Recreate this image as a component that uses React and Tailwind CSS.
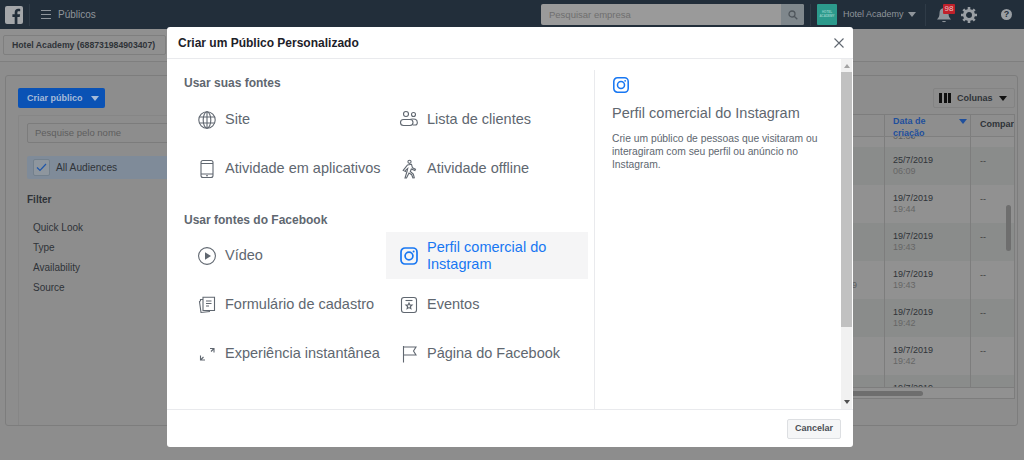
const FONT = { fontFamily: '"Liberation Sans", Arial, sans-serif' }

const ROWS = [
  { date: '25/7/2019', time: '06:09', dark: true },
  { date: '19/7/2019', time: '19:44', dark: false },
  { date: '19/7/2019', time: '19:43', dark: true },
  { date: '19/7/2019', time: '19:43', dark: false, note: '9' },
  { date: '19/7/2019', time: '19:42', dark: true },
  { date: '19/7/2019', time: '19:42', dark: false },
]

function Svg({ children, size = 20, className = '' }) {
  return (
    <svg
      width={size}
      height={size}
      viewBox="0 0 20 20"
      fill="none"
      stroke="currentColor"
      strokeWidth="1.1"
      className={className}
    >
      {children}
    </svg>
  )
}

const Globe = () => (
  <Svg>
    <circle cx="10" cy="10" r="8.2" />
    <ellipse cx="10" cy="10" rx="3.8" ry="8.2" />
    <path d="M10 1.8v16.4M2.4 7h15.2M2.4 13h15.2" />
  </Svg>
)

const Clients = () => (
  <Svg>
    <circle cx="7" cy="4" r="2.5" />
    <circle cx="14.500" cy="4.500" r="2" />
    <rect x="1.500" y="9.500" width="12.500" height="6" rx="3" />
    <path d="M11.500 9.300c1.500-.4 3.500-.4 4.800 0 2.700.8 2.700 5.700 0 5.700H14" />
  </Svg>
)

const Phone = () => (
  <Svg>
    <rect x="4" y="1.500" width="12" height="17" rx="2" />
    <path d="M4 4.500h12M4 15h12M9 16.800h2" />
  </Svg>
)

const Walker = () => (
  <Svg>
    <circle cx="10.500" cy="2.800" r="1.600" />
    <path d="M8.500 6l4-.7 1 3.500 3 1.500-.6 1.200-3.600-1.500-1 2.500 3 2.500 1 3.800-1.400.2-1.200-3.300-2.700-1.700-2.500 5H6l2-6.500.7-3-2 1.700-.2 1.300-2.300-1.100z" />
  </Svg>
)

const Play = () => (
  <Svg>
    <circle cx="10" cy="10" r="8.400" />
    <path d="M8 6.200l6 3.800-6 3.800z" fill="currentColor" stroke="none" />
  </Svg>
)

const Insta = ({ size = 20 }) => (
  <Svg size={size}>
    <rect x="2" y="2" width="16" height="16" rx="4" strokeWidth="1.700" />
    <circle cx="10" cy="10" r="3.900" strokeWidth="1.700" />
    <circle cx="14.600" cy="5.400" r="1" fill="currentColor" stroke="none" />
  </Svg>
)

const Form = () => (
  <Svg>
    <path d="M6 3.500V2.200h11.500v13.300H6z" />
    <path d="M9 6h5.500M9 8.500h5.500M9 11h3" />
    <path d="M6 4.500H3.500v1.500M3.500 6l-1 .5 1.500 11 9-1" />
  </Svg>
)

const Events = () => (
  <Svg>
    <rect x="2.500" y="2.500" width="15" height="15" rx="2.500" />
    <path d="M6.500 5.500h7" />
    <path d="M10 8l.9 2h2.100l-1.600 1.500.5 2.200-1.900-1.100-1.900 1.100.5-2.200L7 10h2.100z" />
  </Svg>
)

const Expand = () => (
  <Svg>
    <path d="M13 4.500h4v4M17 4.500l-3 3M3.500 11.500V16h4.500M3.500 16l3-3" />
  </Svg>
)

const Flag = () => (
  <Svg>
    <path d="M4.500 2v16.500M4.500 3h12.500l-2.500 4 2.500 4H4.500" />
  </Svg>
)

function Source({ icon, label, active }) {
  return (
    <div
      className={`flex h-[47px] items-center gap-[8px] pl-[13px] text-[14.5px] leading-[17px] ${
        active ? 'bg-[#f5f5f6] text-[#1877f2]' : 'text-[#606770]'
      }`}
    >
      <span className="w-[20px] shrink-0">{icon}</span>
      <span>{label}</span>
    </div>
  )
}

function Caret({ className = '' }) {
  return <span className={`inline-block border-x-[4px] border-t-[5px] border-x-transparent ${className}`} />
}

function TopBar() {
  return (
    <header className="flex h-[29px] items-center bg-[#222e3a] text-[#8f959b]">
      <svg width="18" height="18" viewBox="0 0 18 18" className="ml-[5px]">
        <rect width="18" height="18" rx="2" fill="#a4a7aa" />
        <path d="M12.400 18v-7h2.300l.4-2.700h-2.700V6.600c0-.8.300-1.300 1.400-1.300h1.400V2.900c-.3 0-1.100-.1-2-.1-2.100 0-3.500 1.300-3.500 3.500v2H7.400V11h2.300v7z" fill="#222e3a" />
      </svg>
      <div className="ml-[6px] h-[22px] w-px bg-[#2f3b47]" />
      <div className="ml-[11px] flex w-[10px] flex-col gap-[3px]">
        <span className="h-px bg-[#8f959b]" />
        <span className="h-px bg-[#8f959b]" />
        <span className="h-px bg-[#8f959b]" />
      </div>
      <span className="ml-[7px] w-[38px] whitespace-nowrap text-[10px]">Públicos</span>
      <div className="ml-[445px] flex h-[21px] w-[263px] overflow-hidden rounded-[2px] bg-[#9a9a9a]">
        <span className="flex-1 pl-[8px] text-[9.500px] leading-[21px] text-[#6f6f6f]">Pesquisar empresa</span>
        <span className="flex w-[23px] items-center justify-center bg-[#7f878c]">
          <svg width="10" height="10" viewBox="0 0 10 10" fill="none" stroke="#4f565c" strokeWidth="1.300">
            <circle cx="4" cy="4" r="3" />
            <path d="M6.200 6.200L9.300 9.300" />
          </svg>
        </span>
      </div>
      <div className="ml-[6px] h-[22px] w-px bg-[#2f3b47]" />
      <div className="ml-[6px] h-[21px] w-[20px] rounded-[1px] bg-[#2c9a8c] pt-[6px] text-center text-[3px] font-bold leading-[4px] text-[#8fcfc6]">
        HOTEL
        <br />
        ACADEMY
      </div>
      <span className="ml-[6px] w-[58px] whitespace-nowrap text-[9px]">Hotel Academy</span>
      <Caret className="ml-[7px] border-t-[#8f959b]" />
      <div className="ml-[9px] h-[22px] w-px bg-[#2f3b47]" />
      <div className="relative ml-[11px] h-[20px] w-[14px]">
        <svg width="14" height="16" viewBox="0 0 14 16" className="absolute left-0 top-[3px]" fill="#8f959b">
          <path d="M7 0c3 0 4.500 2.200 4.500 5 0 3 .7 4.500 2.500 6.500H0C1.800 9.500 2.500 8 2.500 5 2.500 2.200 4 0 7 0zM5 13h4c0 1.500-4 1.500-4 0z" />
        </svg>
        <span className="absolute left-[6px] top-[-1px] h-[10px] w-[12px] rounded-[1px] bg-[#c0202a] text-center text-[8px] leading-[10px] text-[#e8c4c6]">
          98
        </span>
      </div>
      <svg width="16" height="16" viewBox="0 0 16 16" className="ml-[10px]">
        <circle cx="8" cy="8" r="4.500" fill="none" stroke="#9a9fa4" strokeWidth="3" />
        <path d="M8 0v3M8 13v3M0 8h3M13 8h3M2.300 2.300l2.100 2.100M11.600 11.600l2.100 2.100M2.300 13.700l2.100-2.100M11.600 4.400l2.100-2.100" stroke="#9a9fa4" strokeWidth="2.600" />
      </svg>
      <span className="ml-[24px] h-[11px] w-[11px] rounded-full bg-[#9a9fa4] text-center text-[9px] font-bold leading-[11px] text-[#222e3a]">
        ?
      </span>
    </header>
  )
}

function Sidebar() {
  return (
    <aside className="flex w-[200px] shrink-0 flex-col">
      <button className="ml-[12px] flex h-[20px] w-[87px] items-center gap-[8px] whitespace-nowrap rounded-[2px] bg-[#0a52b5] pl-[9px] pt-px text-[9px] font-bold text-[#a6bcd9]">
        Criar público
        <Caret className="border-t-[#a6bcd9]" />
      </button>
      <div className="ml-[12px] mt-[7px] flex-1 rounded-tl-[2px] border-l border-t border-[#868686] pl-[8px] pt-[7px]">
        <div className="h-[20px] rounded-[2px] border border-[#7c7c7c] pl-[7px] text-[9.500px] leading-[18px] text-[#5e5e5e]">
          Pesquise pelo nome
        </div>
        <div className="mt-[13px] flex h-[23px] items-center gap-[6px] rounded-l-[2px] bg-[#7f8b99] pl-[6px] text-[10.200px] text-[#2f3338]">
          <span className="flex h-[17px] w-[17px] items-center justify-center rounded-[2px] border border-[#73808c] bg-[#8e969e]">
            <svg width="11" height="9" viewBox="0 0 11 9" fill="none" stroke="#1f56a8" strokeWidth="1.200">
              <path d="M1 4.500l3 3 6-6.500" />
            </svg>
          </span>
          All Audiences
        </div>
        <div className="mt-[15px] text-[10px] font-bold leading-[12px] text-[#2f3338]">Filter</div>
        <ul className="ml-[6px] mt-[16px] flex flex-col gap-[8px] text-[10px] leading-[12px] text-[#2f3338]">
          <li>Quick Look</li>
          <li>Type</li>
          <li>Availability</li>
          <li>Source</li>
        </ul>
      </div>
    </aside>
  )
}

function DataTable() {
  return (
    <section className="flex min-w-0 flex-1 flex-col items-end pr-[2px]">
      <button className="flex h-[20px] w-[82px] items-center rounded-[2px] border border-[#838383] pl-[5px] text-[9px] font-bold text-[#2f3338]">
        <span className="flex gap-[1.500px]">
          <span className="h-[10px] w-[3px] bg-[#111]" />
          <span className="h-[10px] w-[3px] bg-[#111]" />
          <span className="h-[10px] w-[3px] bg-[#111]" />
        </span>
        <span className="ml-[6px] pt-px">Colunas</span>
        <Caret className="ml-[6px] border-x-[3px] border-t-[4px] border-t-[#111]" />
      </button>
      <div className="relative mt-[6px] flex h-[285px] w-[400px] flex-col border border-[#7d7d7d]">
        <div className="flex h-[21px] shrink-0 justify-end bg-[#8e8e8e] text-[9px] leading-[11.500px]">
          <div className="relative h-[21px] w-[87px] border-x border-[#7d7d7d] pl-[8px] pr-[30px] pt-px font-bold text-[#1f4f9c]">
            Data de criação
            <Caret className="absolute right-[3px] top-[4px] border-x-[3px] border-t-[3px] border-t-[#1f4f9c]" />
          </div>
          <div className="w-[43px] overflow-hidden pl-[9px] pt-[4px] font-bold text-[#2f3338]">Compar</div>
        </div>
        <div className="flex h-[11px] shrink-0 justify-end overflow-hidden border-t border-[#7f7f7f] bg-[#919191]">
          <div className="w-[87px] border-x border-[#7d7d7d] pl-[8px] text-[9px] leading-[11px] text-[#5d5d5d]">
            <span className="block -mt-[6px]">01:38</span>
          </div>
          <div className="w-[43px]" />
        </div>
        {ROWS.map((row, i) => (
          <div key={i} className={`flex h-[38px] shrink-0 justify-end ${row.dark ? 'bg-[#8a8c8b]' : 'bg-[#919191]'}`}>
            {row.note && <div className="pr-[27px] pt-[19px] text-[9px] leading-[11px] text-[#5d5d5d]">{row.note}</div>}
            <div className="w-[87px] border-x border-[#7d7d7d] pl-[8px] pt-[8px] text-[9px] leading-[11px] text-[#2f3338]">
              {row.date}
              <div className="text-[#666]">{row.time}</div>
            </div>
            <div className="w-[43px] pl-[9px] pt-[9px] text-[9px] leading-[11px] text-[#3d3d3d]">--</div>
          </div>
        ))}
        <div className="flex h-[12px] shrink-0 justify-end overflow-hidden bg-[#8a8c8b]">
          <div className="w-[87px] border-x border-[#7d7d7d] pl-[8px] pt-[8px] text-[9px] leading-[11px] text-[#2f3338]">19/7/2019</div>
          <div className="w-[43px]" />
        </div>
        <div className="flex-1 border-t border-[#7d7d7d] bg-[#919191]" />
        <div className="absolute bottom-[2px] left-[230px] h-[5px] w-[77px] rounded-[3px] bg-[#6e6e6e]" />
        <div className="absolute right-[3px] top-[90px] h-[46px] w-[5px] rounded-[3px] bg-[#6e6e6e]" />
      </div>
    </section>
  )
}

function Modal() {
  return (
    <div className="absolute left-[167px] top-[27px] flex h-[420px] w-[686px] flex-col rounded-[3px] bg-white">
      <div className="flex h-[32px] shrink-0 items-center justify-between border-b border-[#e9eaed] pl-[11px] pr-[9px] text-[12px] font-bold text-[#1d2129]">
        Criar um Público Personalizado
        <svg width="10" height="10" viewBox="0 0 10 10" stroke="#606770" strokeWidth="1.100">
          <path d="M.5.5l9 9M9.500.5l-9 9" />
        </svg>
      </div>
      <div className="flex min-h-0 flex-1">
        <div className="w-[427px] shrink-0 pl-[17px] pr-[6px]">
          <h3 className="mt-[17px] text-[12px] font-bold leading-[14px] text-[#606770]">Usar suas fontes</h3>
          <div className="mt-[6px] grid grid-cols-2 gap-y-[2px]">
            <Source icon={<Globe />} label="Site" />
            <Source icon={<Clients />} label="Lista de clientes" />
            <Source icon={<Phone />} label="Atividade em aplicativos" />
            <Source icon={<Walker />} label="Atividade offline" />
          </div>
          <h3 className="mt-[21px] text-[12px] font-bold leading-[14px] text-[#606770]">Usar fontes do Facebook</h3>
          <div className="mt-[5px] grid grid-cols-2 gap-y-[2px]">
            <Source icon={<Play />} label="Vídeo" />
            <Source icon={<Insta />} label="Perfil comercial do Instagram" active />
            <Source icon={<Form />} label="Formulário de cadastro" />
            <Source icon={<Events />} label="Eventos" />
            <Source icon={<Expand />} label="Experiência instantânea" />
            <Source icon={<Flag />} label="Página do Facebook" />
          </div>
        </div>
        <div className="mt-[11px] flex-1 border-l border-[#e9eaed] pl-[17px] pr-[16px] pt-[6px] text-[#606770]">
          <span className="block text-[#1877f2]">
            <Insta size={18} />
          </span>
          <h2 className="mt-[11px] text-[14.500px] leading-[17px]">Perfil comercial do Instagram</h2>
          <p className="mt-[10px] text-[10.300px] leading-[13px]">
            Crie um público de pessoas que visitaram ou interagiram com seu perfil ou anúncio no Instagram.
          </p>
        </div>
        <div className="mr-px flex w-[11px] shrink-0 flex-col items-center bg-[#f1f1f1]">
          <span className="mt-[5px] h-0 w-0 border-x-[3px] border-b-[4px] border-x-transparent border-b-[#a3a3a3]" />
          <span className="mt-[4px] h-[255px] w-full bg-[#c1c1c1]" />
          <span className="mt-auto mb-[5px] h-0 w-0 border-x-[3px] border-t-[4px] border-x-transparent border-t-[#505050]" />
        </div>
      </div>
      <div className="flex h-[38px] shrink-0 items-center justify-end border-t border-[#e9eaed] pr-[12px]">
        <button className="h-[20px] w-[54px] rounded-[2px] border border-[#dddfe2] bg-[#f5f6f7] text-[9px] font-bold text-[#4b4f56]">
          Cancelar
        </button>
      </div>
    </div>
  )
}

export default function App() {
  return (
    <div className="relative h-[460px] w-[1024px] overflow-hidden bg-[#8d8d8d]" style={FONT}>
      <TopBar />
      <div className="flex h-[33px] items-center border-b border-[#7f7f7f] bg-[#909090] pl-[3px]">
        <div className="h-[20px] w-[163px] whitespace-nowrap rounded-[2px] border border-[#7f7f7f] pl-[8px] text-[8.700px] font-bold leading-[18px] text-[#2f3338]">
          Hotel Academy (688731984903407)
        </div>
      </div>
      <main className="mx-[5px] mt-[13px] flex h-[351px] w-[1013px] rounded-[3px] border border-[#7d7d7d] pt-[12px]">
        <Sidebar />
        <DataTable />
      </main>
      <Modal />
    </div>
  )
}
